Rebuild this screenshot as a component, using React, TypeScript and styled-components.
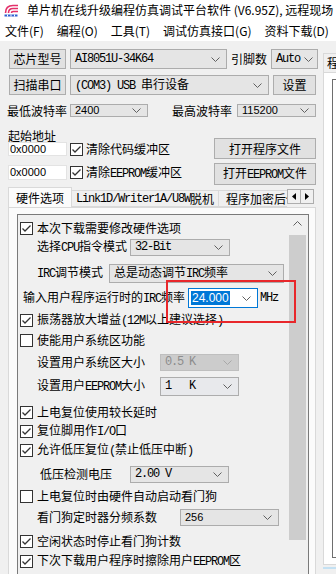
import React from 'react';
import styled, { createGlobalStyle, css } from 'styled-components';

const CJK = `"Noto Sans CJK SC", "Noto Sans", sans-serif`;
const MONO = `"Liberation Mono", "DejaVu Sans Mono", monospace`;
const SANS = `"Liberation Sans", "Noto Sans CJK SC", sans-serif`;

const GlobalStyle = createGlobalStyle`
  * { box-sizing: border-box; }
  html, body { margin: 0; padding: 0; background: #f0f0f0; }
  body { font-family: ${CJK}; font-size: 12px; color: #000; }
`;

// whole window, clipped to the screenshot
const Window = styled.div`
  width: 336px;
  height: 574px;
  overflow: hidden;
  display: flex;
  flex-direction: column;
  background: #f0f0f0;
`;

const TitleBar = styled.div`
  height: 20px;
  flex: none;
  display: flex;
  align-items: center;
  gap: 8px;
  padding-left: 4px;
  background: #fff;
  white-space: nowrap;
  overflow: hidden;
  line-height: 1;
`;

const MenuBar = styled.div`
  height: 21px;
  flex: none;
  display: flex;
  align-items: center;
  gap: 13px;
  padding-left: 5px;
  background: #fff;
  white-space: nowrap;
  line-height: 1;
`;

const Body = styled.div`
  flex: 1;
  display: flex;
  min-height: 0;
`;

const LeftPane = styled.div`
  width: 320px;
  flex: none;
  display: flex;
  flex-direction: column;
  padding-top: 8px;
`;

// a horizontal line of controls
const Row = styled.div<{ $top?: number; $h: number; $pl?: number; $gap?: number }>`
  display: flex;
  align-items: center;
  flex: none;
  height: ${p => p.$h}px;
  margin-top: ${p => p.$top ?? 0}px;
  padding-left: ${p => p.$pl ?? 0}px;
  gap: ${p => p.$gap ?? 4}px;
  white-space: nowrap;
  line-height: 1;
`;

const Button = styled.div<{ $w: number; $h?: number }>`
  width: ${p => p.$w}px;
  height: ${p => p.$h ?? 20}px;
  flex: none;
  display: flex;
  align-items: center;
  justify-content: center;
  background: #e1e1e1;
  border: 1px solid #adadad;
  line-height: 1;
  white-space: nowrap;
  overflow: hidden;
`;

type ComboState = 'normal' | 'disabled' | 'focus' | 'light';

const Combo = styled.div<{ $w: number; $h: number; $state?: ComboState }>`
  width: ${p => p.$w}px;
  height: ${p => p.$h}px;
  flex: none;
  display: flex;
  align-items: center;
  justify-content: space-between;
  padding: 0 6px 0 4px;
  background: #e5e5e5;
  border: 1px solid #acacac;
  line-height: 1;
  white-space: pre;
  overflow: hidden;
  ${p => p.$state === 'disabled' && css`
    background: #cccccc;
    border-color: #bfbfbf;
    color: #8d8d8d;
  `}
  ${p => p.$state === 'focus' && css`
    background: #fff;
    border-color: #0078d7;
    padding-left: 2px;
  `}
  ${p => p.$state === 'light' && css`
    background: #e8e9ec;
    border-color: #adadad;
  `}
`;

const Value = styled.span<{ $font?: 'mono' | 'sans' | 'cjk' }>`
  font-family: ${p => (p.$font === 'mono' ? MONO : p.$font === 'sans' ? SANS : CJK)};
  font-size: ${p => (p.$font === 'sans' ? '11px' : '12px')};
  letter-spacing: ${p => (p.$font === 'mono' ? '-1.2px' : '0')};
`;

const Selected = styled.span`
  font-family: ${SANS};
  font-size: 12px;
  background: #0078d7;
  color: #fff;
  padding: 1px 1px;
`;

// latin runs inside chinese captions (half width, like SimSun)
const Latin = styled.span`
  font-family: ${MONO};
  font-size: 12px;
  letter-spacing: -1.2px;
`;

const Label = styled.span<{ $w?: number; $ml?: number }>`
  flex: none;
  width: ${p => (p.$w ? `${p.$w}px` : 'auto')};
  margin-left: ${p => p.$ml ?? 0}px;
  white-space: nowrap;
`;

const TextInput = styled.div<{ $h: number }>`
  width: 59px;
  height: ${p => p.$h}px;
  flex: none;
  display: flex;
  align-items: center;
  padding-left: 1px;
  background: #fff;
  border: 1px solid #e3e3e3;
  font-family: ${SANS};
  font-size: 11px;
`;

const Box = styled.span`
  width: 13px;
  height: 13px;
  flex: none;
  display: block;
  background: #fff;
  border: 1px solid #333;
`;

const AddressGroup = styled.div`
  display: flex;
  margin-top: 12px;
  padding-left: 8px;
  flex: none;
`;

const AddressInputs = styled.div`
  width: 206px;
  display: flex;
  flex-direction: column;
`;

const AddressButtons = styled.div`
  display: flex;
  flex-direction: column;
  gap: 4px;
  padding-top: 9px;
`;

const TabStrip = styled.div`
  height: 20px;
  margin-top: 2px;
  padding-left: 8px;
  display: flex;
  align-items: flex-end;
  flex: none;
  position: relative;
  z-index: 1;
`;

const TabList = styled.div`
  width: 279px;
  display: flex;
  align-items: flex-end;
  overflow: hidden;
  height: 20px;
`;

const Tab = styled.div<{ $w: number; $active?: boolean; $pad?: number }>`
  width: ${p => p.$w}px;
  flex: none;
  height: ${p => (p.$active ? 21 : 17)}px;
  margin-bottom: ${p => (p.$active ? -1 : 0)}px;
  margin-left: ${p => (p.$active ? 0 : -1)}px;
  padding-left: ${p => p.$pad ?? 7}px;
  display: flex;
  align-items: center;
  background: ${p => (p.$active ? '#fbfbfb' : '#f0f0f0')};
  border: 1px solid #d9d9d9;
  border-bottom: ${p => (p.$active ? 'none' : '1px solid #d9d9d9')};
  white-space: nowrap;
  overflow: hidden;
  line-height: 1;
`;

const TabArrows = styled.div`
  display: flex;
  align-self: flex-start;
  margin-top: 2px;
`;

const ArrowButton = styled.div`
  width: 14px;
  height: 15px;
  display: flex;
  align-items: center;
  justify-content: center;
  background: #f0f0f0;
  border: 1px solid #adadad;
  & + & { margin-left: -1px; }
`;

const TabPage = styled.div`
  margin-left: 8px;
  width: 308px;
  height: 400px;
  flex: none;
  background: #fbfbfb;
  border: 1px solid #d9d9d9;
  padding: 6px 0 0 8px;
`;

const ScrollBox = styled.div`
  position: relative;
  width: 292px;
  height: 420px;
  display: flex;
  background: #f0f0f0;
  border: 1px solid #7a7a7a;
`;

const ScrollContent = styled.div`
  flex: 1;
  display: flex;
  flex-direction: column;
  padding-top: 4px;
`;

const ScrollBar = styled.div`
  width: 17px;
  margin-right: 2px;
  display: flex;
  flex-direction: column;
  flex: none;
`;

const ScrollArrow = styled.div`
  height: 20px;
  display: flex;
  align-items: center;
  justify-content: center;
  padding-bottom: 4px;
`;

const ScrollThumb = styled.div`
  height: 305px;
  background: #cdcdcd;
`;

// red annotation drawn over the dialog
const RedMark = styled.div`
  position: absolute;
  left: 148px;
  top: 65px;
  width: 130px;
  height: 43px;
  border: 2px solid #e8272b;
  z-index: 2;
  pointer-events: none;
`;

const RightPane = styled.div`
  flex: 1;
  overflow: hidden;
  padding: 12px 0 0 3px;
  display: flex;
  flex-direction: column;
`;

const RightTab = styled.div`
  width: 40px;
  height: 19px;
  flex: none;
  padding-left: 3px;
  display: flex;
  align-items: center;
  background: #f0f0f0;
  border: 1px solid #d9d9d9;
  border-bottom: none;
  line-height: 1;
`;

const RightPage = styled.div`
  width: 40px;
  height: 493px;
  flex: none;
  background: #fff;
  border: 1px solid #d9d9d9;
  padding: 6px 0 0 8px;
`;

const RightInner = styled.div`
  height: 479px;
  width: 40px;
  background: #fff;
  border: 1px solid #6e6e6e;
`;

const Progress = styled.div`
  margin-top: 2px;
  height: 2px;
  width: 40px;
  background: #c4e1f3;
`;

// ---- small drawings ----

const Chevron: React.FC<{ up?: boolean; color?: string }> = ({ up, color = '#606060' }) => (
  <svg width="9" height="5" viewBox="0 0 9 5" style={{ flex: 'none' }}>
    <polyline
      points={up ? '0.5,4.5 4.5,0.5 8.5,4.5' : '0.5,0.5 4.5,4.5 8.5,0.5'}
      fill="none"
      stroke={color}
      strokeWidth="1"
    />
  </svg>
);

const Triangle: React.FC<{ dir: 'left' | 'right' }> = ({ dir }) => (
  <svg width="4" height="7" viewBox="0 0 4 7">
    <polygon points={dir === 'left' ? '4,0 0,3.5 4,7' : '0,0 4,3.5 0,7'} fill="#000" />
  </svg>
);

const CheckBox: React.FC<{ checked: boolean }> = ({ checked }) => (
  <Box>
    {checked && (
      <svg width="11" height="11" viewBox="0 0 11 11" style={{ display: 'block' }}>
        <polyline points="1.5,5.5 4,8 9.5,2.5" fill="none" stroke="#333" strokeWidth="1.3" />
      </svg>
    )}
  </Box>
);

const AppIcon = () => (
  <svg width="15" height="13" viewBox="0 0 15 13" style={{ flex: 'none' }}>
    <path d="M1.5 9 Q1.5 1.5 9 1.5 H14" fill="none" stroke="#e4306a" strokeWidth="1.6" />
    <path d="M4.5 9 Q4.5 4.5 9 4.5 H14" fill="none" stroke="#e4306a" strokeWidth="1.6" />
    <path d="M7.5 9 Q7.5 7.5 9 7.5 H14" fill="none" stroke="#e4306a" strokeWidth="1.6" />
    <rect x="0.5" y="10.5" width="13" height="2" fill="#2f5fd0" />
    <rect x="3" y="10.5" width="1" height="2" fill="#fff" />
    <rect x="6.5" y="10.5" width="1" height="2" fill="#fff" />
    <rect x="10" y="10.5" width="1" height="2" fill="#fff" />
  </svg>
);

// split a caption into chinese text and half-width latin runs
const Caption: React.FC<{ text: string }> = ({ text }) => (
  <>
    {text.split(/([ -~]+)/).map((part, i) =>
      i % 2 === 1 ? <Latin key={i}>{part}</Latin> : part
    )}
  </>
);

type Item =
  | { kind: 'check'; gap: number; checked: boolean; text: string }
  | {
      kind: 'field';
      gap: number;
      indent: number;
      label: string;
      at: number;
      w: number;
      h: number;
      value: string;
      font: 'mono' | 'sans' | 'cjk';
      state?: ComboState;
      suffix?: string;
    };

const items: Item[] = [
  { kind: 'check', gap: 0, checked: true, text: '本次下载需要修改硬件选项' },
  { kind: 'field', gap: 1, indent: 37, label: '选择CPU指令模式', at: 130, w: 100, h: 17, value: '32-Bit', font: 'mono' },
  { kind: 'field', gap: 8, indent: 37, label: 'IRC调节模式', at: 109, w: 175, h: 19, value: '总是动态调节IRC频率', font: 'cjk' },
  { kind: 'field', gap: 7, indent: 23, label: '输入用户程序运行时的IRC频率', at: 188, w: 70, h: 20, value: '24.000', font: 'sans', state: 'focus', suffix: 'MHz' },
  { kind: 'check', gap: 4, checked: true, text: '振荡器放大增益(12M以上建议选择)' },
  { kind: 'check', gap: 2, checked: false, text: '使能用户系统区功能' },
  { kind: 'field', gap: 4, indent: 37, label: '设置用户系统区大小', at: 160, w: 79, h: 17, value: '0.5 K', font: 'mono', state: 'disabled' },
  { kind: 'field', gap: 6, indent: 37, label: '设置用户EEPROM大小', at: 160, w: 79, h: 19, value: '1   K', font: 'mono', state: 'light' },
  { kind: 'check', gap: 8, checked: true, text: '上电复位使用较长延时' },
  { kind: 'check', gap: 1, checked: true, text: '复位脚用作I/O口' },
  { kind: 'check', gap: 1, checked: true, text: '允许低压复位(禁止低压中断)' },
  { kind: 'field', gap: 6, indent: 40, label: '低压检测电压', at: 130, w: 99, h: 17, value: '2.00 V', font: 'mono' },
  { kind: 'check', gap: 4, checked: false, text: '上电复位时由硬件自动启动看门狗' },
  { kind: 'field', gap: 3, indent: 37, label: '看门狗定时器分频系数', at: 180, w: 99, h: 17, value: '256', font: 'sans' },
  { kind: 'check', gap: 6, checked: true, text: '空闲状态时停止看门狗计数' },
  { kind: 'check', gap: 2, checked: true, text: '下次下载用户程序时擦除用户EEPROM区' },
];

const CONTENT_X = 18;

const menus = ['文件(F)', '编程(O)', '工具(T)', '调试仿真接口(G)', '资料下载(D)'];

const App: React.FC = () => (
  <Window>
    <GlobalStyle />
    <TitleBar>
      <AppIcon />
      <span>单片机在线升级编程仿真调试平台软件 (V6.95Z), 远程现场</span>
    </TitleBar>
    <MenuBar>
      {menus.map(m => (
        <span key={m}>{m}</span>
      ))}
    </MenuBar>

    <Body>
      <LeftPane>
        <Row $h={20} $pl={9}>
          <Button $w={57}>芯片型号</Button>
          <Combo $w={157} $h={20}>
            <Value $font="mono">AI8051U-34K64</Value>
            <Chevron />
          </Combo>
          <Label>引脚数</Label>
          <Combo $w={47} $h={20} style={{ paddingRight: 4 }}>
            <Value $font="mono">Auto</Value>
            <Chevron />
          </Combo>
        </Row>

        <Row $top={6} $h={20} $pl={9}>
          <Button $w={57}>扫描串口</Button>
          <Combo $w={199} $h={20}>
            <span>
              <Latin>(COM3) USB </Latin>串行设备
            </span>
            <Chevron />
          </Combo>
          <Button $w={43}>设置</Button>
        </Row>

        <Row $top={9} $h={13} $pl={7} $gap={0}>
          <Label $w={63}>最低波特率</Label>
          <Combo $w={78} $h={13}>
            <Value $font="sans">2400</Value>
            <Chevron />
          </Combo>
          <Label $w={65} $ml={24}>最高波特率</Label>
          <Combo $w={79} $h={13}>
            <Value $font="sans">115200</Value>
            <Chevron />
          </Combo>
        </Row>

        <AddressGroup>
          <AddressInputs>
            <Row $h={13}>起始地址</Row>
            <Row $h={14} $gap={3}>
              <TextInput $h={14}>0x0000</TextInput>
              <CheckBox checked />
              <Label>清除代码缓冲区</Label>
            </Row>
            <Row $top={9} $h={15} $gap={3}>
              <TextInput $h={15}>0x0000</TextInput>
              <CheckBox checked />
              <Label>
                <Caption text="清除EEPROM缓冲区" />
              </Label>
            </Row>
          </AddressInputs>
          <AddressButtons>
            <Button $w={102} $h={21}>打开程序文件</Button>
            <Button $w={102} $h={22}>
              <span>
                <Caption text="打开EEPROM文件" />
              </span>
            </Button>
          </AddressButtons>
        </AddressGroup>

        <TabStrip>
          <TabList>
            <Tab $w={64} $active>硬件选项</Tab>
            <Tab $w={148} $pad={4}>
              <Caption text="Link1D/Writer1A/U8W脱机" />
            </Tab>
            <Tab $w={80}>程序加密后传输</Tab>
          </TabList>
          <TabArrows>
            <ArrowButton>
              <Triangle dir="left" />
            </ArrowButton>
            <ArrowButton>
              <Triangle dir="right" />
            </ArrowButton>
          </TabArrows>
        </TabStrip>

        <TabPage>
          <ScrollBox>
            <ScrollContent>
              {items.map((item, i) =>
                item.kind === 'check' ? (
                  <Row key={i} $top={item.gap} $h={18} $pl={2} $gap={4}>
                    <CheckBox checked={item.checked} />
                    <Label>
                      <Caption text={item.text} />
                    </Label>
                  </Row>
                ) : (
                  <Row key={i} $top={item.gap} $h={18} $gap={0}>
                    <Label $ml={item.indent - CONTENT_X} $w={item.at - item.indent}>
                      <Caption text={item.label} />
                    </Label>
                    <Combo $w={item.w} $h={item.h} $state={item.state}>
                      {item.state === 'focus' ? (
                        <Selected>{item.value}</Selected>
                      ) : (
                        <Value $font={item.font}>
                          {item.font === 'cjk' ? <Caption text={item.value} /> : item.value}
                        </Value>
                      )}
                      <Chevron color={item.state === 'disabled' ? '#a8a8a8' : '#606060'} />
                    </Combo>
                    {item.suffix && <Latin style={{ marginLeft: 2 }}>{item.suffix}</Latin>}
                  </Row>
                )
              )}
            </ScrollContent>
            <ScrollBar>
              <ScrollArrow>
                <Chevron up color="#606060" />
              </ScrollArrow>
              <ScrollThumb />
            </ScrollBar>
            <RedMark />
          </ScrollBox>
        </TabPage>
      </LeftPane>

      <RightPane>
        <RightTab>程序</RightTab>
        <RightPage>
          <RightInner />
        </RightPage>
        <Progress />
      </RightPane>
    </Body>
  </Window>
);

export default App;
